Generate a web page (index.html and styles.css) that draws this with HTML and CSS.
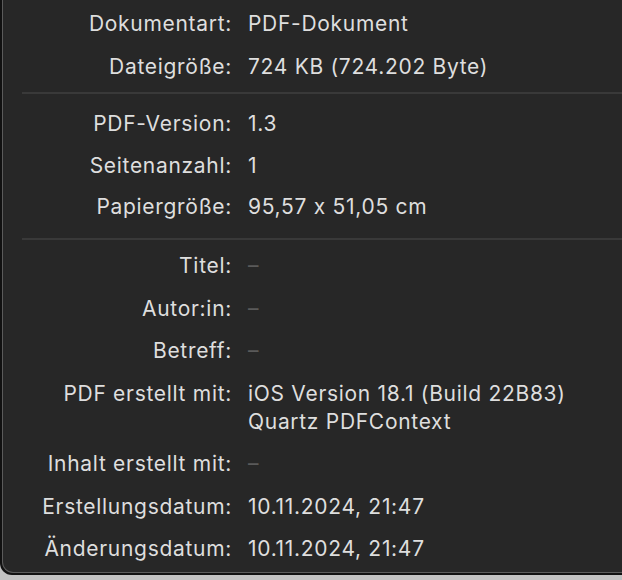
FILE: index.html
```html
<!DOCTYPE html>
<html lang="de">
<head>
<meta charset="utf-8">
<title>Informationen</title>
<link rel="stylesheet" href="styles.css">
</head>
<body>
<div class="window">
  <div class="section first">
    <div class="label">Dokumentart:</div><div class="value">PDF-Dokument</div>
    <div class="label">Dateigröße:</div><div class="value">724 KB (724.202 Byte)</div>
  </div>
  <div class="divider divider-a"></div>
  <div class="section second">
    <div class="label">PDF-Version:</div><div class="value">1.3</div>
    <div class="label">Seitenanzahl:</div><div class="value">1</div>
    <div class="label">Papiergröße:</div><div class="value">95,57 x 51,05 cm</div>
  </div>
  <div class="divider divider-b"></div>
  <div class="section third">
    <div class="label">Titel:</div><div class="value empty">–</div>
    <div class="label">Autor:in:</div><div class="value empty">–</div>
    <div class="label">Betreff:</div><div class="value empty">–</div>
    <div class="label">PDF erstellt mit:</div><div class="value">iOS Version 18.1 (Build 22B83)<br>Quartz PDFContext</div>
    <div class="label">Inhalt erstellt mit:</div><div class="value empty">–</div>
    <div class="label">Erstellungsdatum:</div><div class="value">10.11.2024, 21:47</div>
    <div class="label">Änderungsdatum:</div><div class="value">10.11.2024, 21:47</div>
  </div>
</div>
</body>
</html>
```
FILE: styles.css
```css
html, body {
  margin: 0;
  padding: 0;
}
body {
  background: #c2c2c2;
  width: 622px;
  height: 580px;
  overflow: hidden;
  font-family: Inter, "Noto Sans", "Liberation Sans", sans-serif;
  font-feature-settings: "calt" 0;
}
.window {
  margin-left: 2px;
  width: 640px;
  height: 573px;
  background: #272727;
  border-left: 1px solid #5b5b5b;
  border-bottom: 1px solid #5b5b5b;
  border-bottom-left-radius: 11px;
  box-shadow: -1px 1px 0 1px #111111;
  box-sizing: border-box;
  padding-top: 10px;
}
.section {
  display: grid;
  grid-template-columns: 229px 1fr;
  column-gap: 16px;
  font-size: 21px;
  letter-spacing: 0.7px;
  line-height: 28px;
  color: #dedede;
}
.first { row-gap: 15px; }
.second { row-gap: 13.5px; }
.third { row-gap: 14.5px; }
.label {
  text-align: right;
}
.value.empty {
  color: #5a5a5a;
}
.divider {
  height: 2px;
  background: #393939;
  margin-left: 19px;
}
.divider-a { margin-top: 11px; margin-bottom: 16px; }
.divider-b { margin-top: 17px; margin-bottom: 12px; }
```
